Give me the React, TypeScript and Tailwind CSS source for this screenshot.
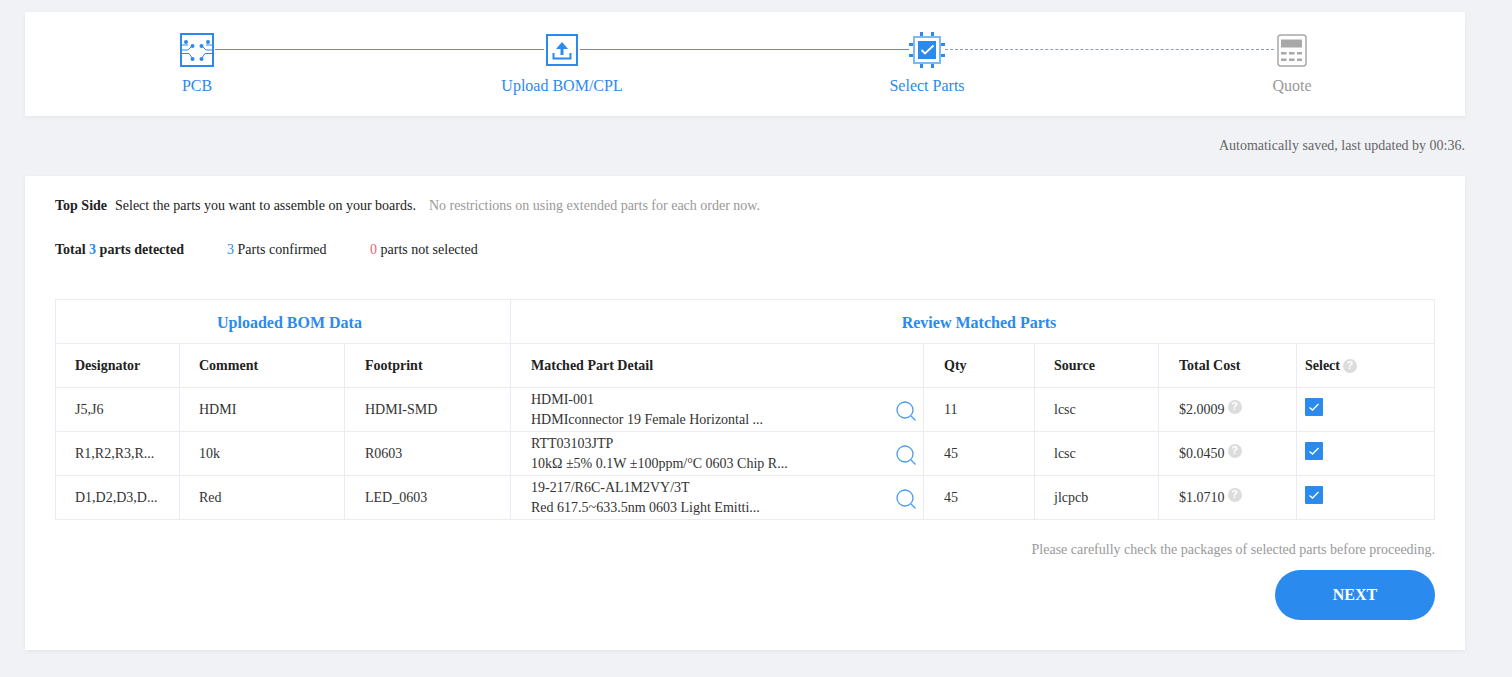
import React from "react";

const rows = [
  {
    designator: "J5,J6",
    comment: "HDMI",
    footprint: "HDMI-SMD",
    part: "HDMI-001",
    detail: "HDMIconnector 19 Female Horizontal ...",
    qty: "11",
    source: "lcsc",
    cost: "$2.0009",
  },
  {
    designator: "R1,R2,R3,R...",
    comment: "10k",
    footprint: "R0603",
    part: "RTT03103JTP",
    detail: "10kΩ ±5% 0.1W ±100ppm/°C 0603 Chip R...",
    qty: "45",
    source: "lcsc",
    cost: "$0.0450",
  },
  {
    designator: "D1,D2,D3,D...",
    comment: "Red",
    footprint: "LED_0603",
    part: "19-217/R6C-AL1M2VY/3T",
    detail: "Red 617.5~633.5nm 0603 Light Emitti...",
    qty: "45",
    source: "jlcpcb",
    cost: "$1.0710",
  },
];

const PcbIcon = () => (
  <svg width="34" height="34" viewBox="0 0 34 34" fill="none" stroke="#2b8aee">
    <rect x="1" y="1" width="32" height="32" strokeWidth="2" />
    <path d="M2 12h6M2 17h6l4-4M2 20.500h7l3.500 5M32 12h-6M32 17h-6l-4-4M32 20.500h-7l-3.500 5" strokeWidth="1" />
    <g fill="#2b8aee" stroke="none">
      <circle cx="6" cy="9" r="2" />
      <circle cx="12.500" cy="13" r="2" />
      <circle cx="28" cy="9" r="2" />
      <circle cx="21.500" cy="13" r="2" />
      <circle cx="12.500" cy="26" r="2" />
      <circle cx="21.500" cy="26" r="2" />
    </g>
  </svg>
);

const UploadIcon = () => (
  <svg width="34" height="34" viewBox="0 0 34 34" fill="none" stroke="#2b8aee">
    <rect x="2" y="2" width="30" height="30" strokeWidth="2" />
    <path d="M8.500 20v5.500h17V20" strokeWidth="2" />
    <path d="M17 22v-7" strokeWidth="3" />
    <path d="M11 16L17 9l6 7z" fill="#2b8aee" stroke="none" />
  </svg>
);

const ChipIcon = () => (
  <svg width="36" height="36" viewBox="0 0 36 36" fill="none">
    <rect x="5" y="5" width="26" height="26" fill="#fff" stroke="#7fb7f3" strokeWidth="2" />
    <rect x="9" y="9" width="18" height="18" fill="#2b8aee" />
    <path d="M12.500 18l3.500 3.500 8.500-8" stroke="#fff" strokeWidth="1.800" />
    <path
      d="M11 0v4h3V0zM22 0v4h3V0zM11 32v4h3v-4zM22 32v4h3v-4zM0 11h4v3H0zM0 22h4v3H0zM32 11h4v3h-4zM32 22h4v3h-4z"
      fill="#2b8aee"
    />
  </svg>
);

const QuoteIcon = () => (
  <svg width="30" height="33" viewBox="0 0 30 33" fill="none">
    <rect x="1" y="1" width="28" height="31" rx="3" stroke="#a8a8a8" strokeWidth="1.500" />
    <rect x="4" y="5.500" width="21" height="8" fill="#a8a8a8" />
    <path d="M4 18h5.500v2.500H4zM12 18h5.500v2.500H12zM20 18h5v2.500h-5zM4 24.500h5.500V27H4zM12 24.500h5.500V27H12zM20 24.500h5V27h-5z" fill="#a8a8a8" />
  </svg>
);

const Help = () => (
  <span className="inline-flex h-[14px] w-[14px] items-center justify-center rounded-full bg-[#dcdcdc] font-['Liberation_Sans',sans-serif] text-[11px] leading-none font-bold text-white">
    ?
  </span>
);

const Step: React.FC<{ label: string; active?: boolean; children: React.ReactNode }> = ({
  label,
  active,
  children,
}) => (
  <div className="relative z-10 flex w-[130px] flex-col items-center">
    <div className="flex h-[34px] items-center justify-center">{children}</div>
    <div className={`mt-[9px] text-[16px] leading-[20px] whitespace-nowrap ${active ? "text-[#2b8aee]" : "text-[#999999]"}`}>
      {label}
    </div>
  </div>
);

const Th: React.FC<{ className?: string; children: React.ReactNode }> = ({ className, children }) => (
  <th className={`h-[44px] border border-[#e9ecf8] pl-[20px] text-left text-[14px] font-bold text-[#222222] ${className || ""}`}>
    {children}
  </th>
);

const Td: React.FC<{ className?: string; children: React.ReactNode }> = ({ className, children }) => (
  <td className={`h-[44px] border border-[#e9ecf8] pl-[20px] text-[14px] text-[#333333] ${className || ""}`}>{children}</td>
);

export default function App() {
  return (
    <div className="min-h-[677px] bg-[#f1f2f6] pt-[12px] pr-[47px] pb-[27px] pl-[25px] font-['Liberation_Serif',serif] text-[14px]">
      <div className="flex h-[104px] items-start bg-white pt-[21px] pr-[108px] pl-[107px] shadow-[0_1px_4px_rgba(0,0,0,0.06)]">
        <Step label="PCB" active>
          <PcbIcon />
        </Step>
        <div className="mt-[16px] -mx-[47px] h-px flex-1 bg-[#4a94e6]" />
        <Step label="Upload BOM/CPL" active>
          <UploadIcon />
        </Step>
        <div className="mt-[16px] -mx-[47px] h-px flex-1 bg-[#4a94e6]" />
        <Step label="Select Parts" active>
          <ChipIcon />
        </Step>
        <div className="mt-[16px] -mx-[47px] flex-1 border-t border-dashed border-[#8c9cae]" />
        <Step label="Quote">
          <QuoteIcon />
        </Step>
      </div>

      <div className="mt-[20px] h-[20px] text-right leading-[20px] text-[#666666]">
        Automatically saved, last updated by 00:36.
      </div>

      <div className="mt-[20px] bg-white px-[30px] pt-[20px] pb-[30px] shadow-[0_1px_4px_rgba(0,0,0,0.06)]">
        <div className="flex h-[20px] items-center leading-[20px] text-[#222222]">
          <b>Top Side</b>
          <span className="ml-[8px]">Select the parts you want to assemble on your boards.</span>
          <span className="ml-[13px] text-[#999999]">No restrictions on using extended parts for each order now.</span>
        </div>
        <div className="mt-[24px] flex h-[20px] items-center leading-[20px] text-[#222222]">
          <b className="w-[172px]">
            Total <span className="text-[#2b8aee]">3</span> parts detected
          </b>
          <span className="w-[143px]">
            <span className="text-[#2b8aee]">3</span> Parts confirmed
          </span>
          <span>
            <span className="text-[#e8637a]">0</span> parts not selected
          </span>
        </div>

        <table className="mt-[39px] w-[1379px] table-fixed border-collapse">
          <colgroup>
            <col className="w-[124px]" />
            <col className="w-[165px]" />
            <col className="w-[166px]" />
            <col className="w-[413px]" />
            <col className="w-[111px]" />
            <col className="w-[124px]" />
            <col className="w-[138px]" />
            <col className="w-[138px]" />
          </colgroup>
          <thead>
            <tr>
              <th colSpan={3} className="h-[44px] border border-[#e9ecf8] pl-[13px] text-center text-[16px] font-bold text-[#2b8aee]">
                <span className="relative top-px">Uploaded BOM Data</span>
              </th>
              <th colSpan={5} className="h-[44px] border border-[#e9ecf8] pl-[13px] text-center text-[16px] font-bold text-[#2b8aee]">
                <span className="relative top-px">Review Matched Parts</span>
              </th>
            </tr>
            <tr>
              <Th className="!pl-[19px]">Designator</Th>
              <Th className="!pl-[19px]">Comment</Th>
              <Th>Footprint</Th>
              <Th>Matched Part Detail</Th>
              <Th>Qty</Th>
              <Th className="!pl-[19px]">Source</Th>
              <Th>Total Cost</Th>
              <Th className="!pl-[8px]">
                <span className="flex items-center gap-[3px]">
                  Select <Help />
                </span>
              </Th>
            </tr>
          </thead>
          <tbody>
            {rows.map((row) => (
              <tr key={row.part}>
                <Td className="!pl-[19px]">{row.designator}</Td>
                <Td className="!pl-[19px]">{row.comment}</Td>
                <Td>{row.footprint}</Td>
                <Td>
                  <div className="flex items-center justify-between pr-[7px]">
                    <div className="leading-[20px] whitespace-nowrap">
                      <div>{row.part}</div>
                      <div>{row.detail}</div>
                    </div>
                    <svg width="20" height="20" viewBox="0 0 20 20" fill="none" stroke="#4a9bee" strokeWidth="1.300" className="mt-[3px]">
                      <circle cx="9" cy="9" r="8" />
                      <path d="M15 15l4.500 4.500" />
                    </svg>
                  </div>
                </Td>
                <Td>{row.qty}</Td>
                <Td className="!pl-[19px]">{row.source}</Td>
                <Td>
                  <span className="flex items-center gap-[3px]">
                    {row.cost}
                    <span className="-mt-[6px] flex">
                      <Help />
                    </span>
                  </span>
                </Td>
                <Td className="!pl-[8px]">
                  <span className="-mt-[6px] flex h-[18px] w-[18px] items-center justify-center rounded-[1px] bg-[#2b8aee]">
                    <svg width="12" height="12" viewBox="0 0 12 12" fill="none" stroke="#fff" strokeWidth="1.300">
                      <path d="M1.500 6.500l3 2.500 6-6" />
                    </svg>
                  </span>
                </Td>
              </tr>
            ))}
          </tbody>
        </table>

        <div className="mt-[20px] h-[20px] text-right leading-[20px] text-[#999999]">
          Please carefully check the packages of selected parts before proceeding.
        </div>
        <div className="mt-[10px] flex justify-end">
          <button className="h-[50px] w-[160px] rounded-[25px] bg-[#2b8aee] text-[16px] font-bold text-white">NEXT</button>
        </div>
      </div>
    </div>
  );
}
